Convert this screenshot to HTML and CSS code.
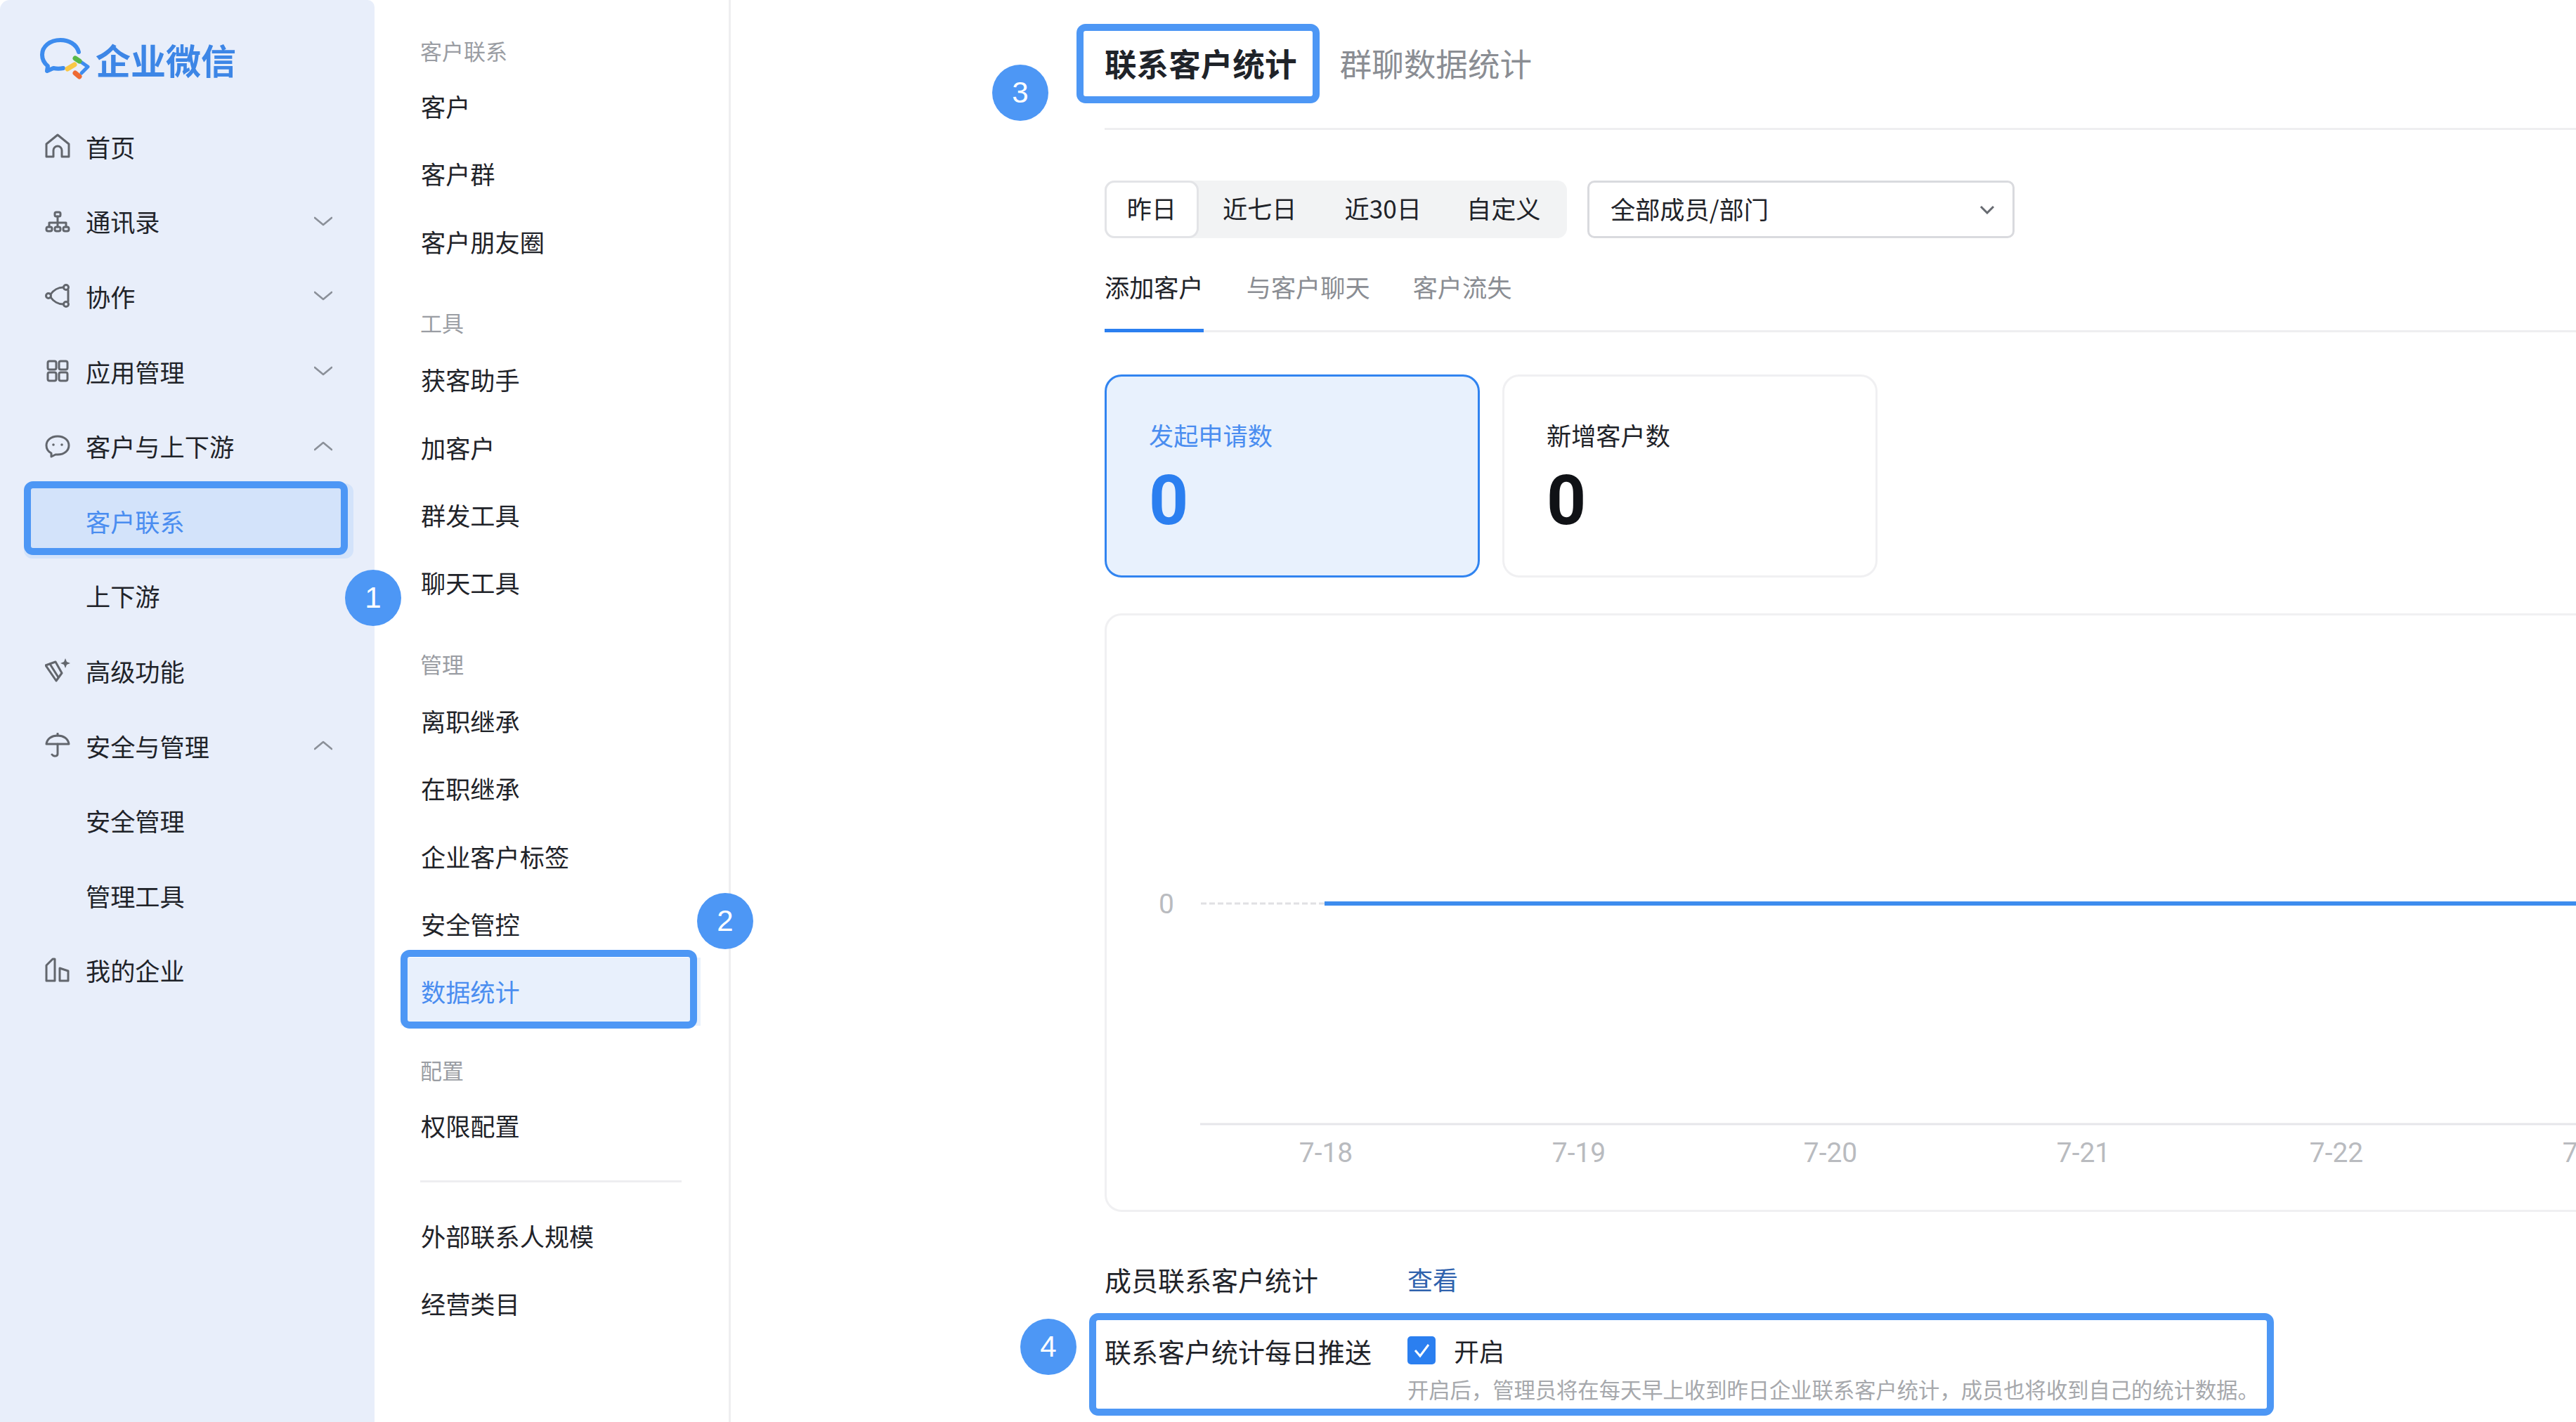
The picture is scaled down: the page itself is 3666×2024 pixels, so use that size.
FILE: index.html
```html
<!DOCTYPE html>
<html lang="zh-CN">
<head>
<meta charset="utf-8">
<title>企业微信</title>
<link rel="stylesheet" href="styles.css">
</head>
<body>
<div class="app">
  <aside class="sidebar">
    <div class="brand">
      <svg class="logo" viewBox="0 0 72 60">
        <path class="logo-bubble" d="M55 20C52 9 41 3 29 3C14 3 3 12 3 24C3 31 6 36 11 40L10 47L19 43C24 44 28 44 33 43"/>
        <path class="logo-blue" d="M58 34L68 41L59 50"/>
        <path class="logo-green" d="M50 29L56 33"/>
        <path class="logo-yellow" d="M39 44L49 38"/>
        <path class="logo-orange" d="M50 50L56 55"/>
      </svg>
      <span class="brand-name">企业微信</span>
    </div>
    <nav class="nav">
      <div class="nav-row">
        <svg class="nav-icon" viewBox="0 0 36 36"><path d="M2 15L18 2L34 15V33H24V24A6 6 0 0 0 12 24V33H2Z"/></svg>
        <span>首页</span>
      </div>
      <div class="nav-row">
        <svg class="nav-icon" viewBox="0 0 36 36"><rect x="14" y="5" width="8" height="6" rx="2"/><path d="M18 11V20M6 26V20H30V26M18 20V26"/><rect x="2" y="26" width="8" height="6" rx="2.5"/><rect x="14" y="26" width="8" height="6" rx="2.5"/><rect x="26" y="26" width="8" height="6" rx="2.5"/></svg>
        <span>通讯录</span>
        <svg class="chev" viewBox="0 0 26 14"><path d="M1 2L13 12L25 2"/></svg>
      </div>
      <div class="nav-row">
        <svg class="nav-icon" viewBox="0 0 36 36"><circle cx="5" cy="18" r="3.5"/><circle cx="30" cy="6" r="3.5"/><circle cx="30" cy="30" r="3.5"/><path d="M8 16C12 10 19 6 26 6M8 20C12 26 19 30 26 30M33 10V26"/></svg>
        <span>协作</span>
        <svg class="chev" viewBox="0 0 26 14"><path d="M1 2L13 12L25 2"/></svg>
      </div>
      <div class="nav-row">
        <svg class="nav-icon" viewBox="0 0 36 36"><rect x="4" y="4" width="12" height="12" rx="2.5"/><rect x="20" y="4" width="12" height="12" rx="2.5"/><rect x="4" y="20" width="12" height="12" rx="2.5"/><rect x="20" y="20" width="12" height="12" rx="2.5"/></svg>
        <span>应用管理</span>
        <svg class="chev" viewBox="0 0 26 14"><path d="M1 2L13 12L25 2"/></svg>
      </div>
      <div class="nav-row">
        <svg class="nav-icon" viewBox="0 0 36 36"><path d="M18 4C8 4 2 10 2 17C2 22 5 26 9 28V33L15 30C16 30 17 30 18 30C28 30 34 24 34 17C34 10 28 4 18 4Z"/><circle class="dot" cx="12" cy="16" r="1.8"/><circle class="dot" cx="24" cy="16" r="1.8"/></svg>
        <span>客户与上下游</span>
        <svg class="chev" viewBox="0 0 26 14"><path d="M1 12L13 2L25 12"/></svg>
      </div>
      <div class="nav-sub is-active">
        <span>客户联系</span>
        <div class="callout callout-nav"></div>
      </div>
      <div class="nav-sub"><span>上下游</span></div>
      <div class="nav-row">
        <svg class="nav-icon" viewBox="0 0 36 36"><path d="M1 11L15 6L24 22L16 33Z"/><path d="M7 9L19 28"/><path class="dot" d="M29 1L31 6L36 8L31 10L29 15L27 10L22 8L27 6Z"/></svg>
        <span>高级功能</span>
      </div>
      <div class="nav-row">
        <svg class="nav-icon" viewBox="0 0 36 36"><path d="M2 16C3 8 10 4 18 4C26 4 33 8 34 16Z"/><path d="M18 1V4M18 16V30C18 34 12 34 10 31"/></svg>
        <span>安全与管理</span>
        <svg class="chev" viewBox="0 0 26 14"><path d="M1 12L13 2L25 12"/></svg>
      </div>
      <div class="nav-sub"><span>安全管理</span></div>
      <div class="nav-sub"><span>管理工具</span></div>
      <div class="nav-row">
        <svg class="nav-icon" viewBox="0 0 36 36"><path d="M2 33V11L11 2H14V33Z"/><path d="M21 33V15L33 19V33Z"/></svg>
        <span>我的企业</span>
      </div>
    </nav>
  </aside>

  <aside class="subnav">
    <div class="group-label">客户联系</div>
    <div class="sub-item">客户</div>
    <div class="sub-item">客户群</div>
    <div class="sub-item">客户朋友圈</div>
    <div class="group-label group-next">工具</div>
    <div class="sub-item">获客助手</div>
    <div class="sub-item">加客户</div>
    <div class="sub-item">群发工具</div>
    <div class="sub-item">聊天工具</div>
    <div class="group-label group-next">管理</div>
    <div class="sub-item">离职继承</div>
    <div class="sub-item">在职继承</div>
    <div class="sub-item">企业客户标签</div>
    <div class="sub-item">安全管控</div>
    <div class="sub-item is-active">
      数据统计
      <div class="callout callout-sub"></div>
    </div>
    <div class="group-label group-tight">配置</div>
    <div class="sub-item">权限配置</div>
    <div class="divider"></div>
    <div class="sub-item">外部联系人规模</div>
    <div class="sub-item">经营类目</div>
  </aside>

  <main class="main">
    <header class="title-tabs">
      <div class="title-tab is-active">联系客户统计<div class="callout callout-title"></div></div>
      <div class="title-tab">群聊数据统计</div>
    </header>

    <div class="filters">
      <div class="segments">
        <div class="segment is-active">昨日</div>
        <div class="segment seg-b">近七日</div>
        <div class="segment seg-c">近30日</div>
        <div class="segment seg-d">自定义</div>
      </div>
      <div class="select">
        <span>全部成员/部门</span>
        <svg class="select-chev" viewBox="0 0 22 13"><path d="M2 2L11 11L20 2"/></svg>
      </div>
    </div>

    <div class="metric-tabs">
      <div class="metric-tab is-active">添加客户</div>
      <div class="metric-tab">与客户聊天</div>
      <div class="metric-tab">客户流失</div>
    </div>

    <div class="cards">
      <div class="card is-active">
        <div class="card-label">发起申请数</div>
        <div class="card-num">0</div>
      </div>
      <div class="card">
        <div class="card-label">新增客户数</div>
        <div class="card-num">0</div>
      </div>
    </div>

    <div class="chart">
      <svg class="chart-svg" viewBox="0 0 2200 846">
        <line class="grid-dash" x1="134" y1="410" x2="310" y2="410"/>
        <line class="series" x1="310" y1="410" x2="2200" y2="410"/>
        <line class="axis" x1="133" y1="724" x2="2200" y2="724"/>
        <text class="tick" x="85" y="424">0</text>
        <text class="tick" x="312" y="778">7-18</text>
        <text class="tick" x="672" y="778">7-19</text>
        <text class="tick" x="1030" y="778">7-20</text>
        <text class="tick" x="1390" y="778">7-21</text>
        <text class="tick" x="1750" y="778">7-22</text>
        <text class="tick" x="2110" y="778">7-23</text>
      </svg>
    </div>

    <div class="form-row form-view">
      <div class="form-label">成员联系客户统计</div>
      <a class="form-link">查看</a>
    </div>
    <div class="form-push">
      <div class="form-row">
        <div class="form-label">联系客户统计每日推送</div>
        <div class="check">
          <svg class="check-box" viewBox="0 0 40 40"><rect width="40" height="40" rx="5"/><path d="M11 20L18 28L30 12"/></svg>
          <span>开启</span>
        </div>
      </div>
      <div class="form-help">开启后，管理员将在每天早上收到昨日企业联系客户统计，成员也将收到自己的统计数据。</div>
      <div class="callout callout-push"></div>
    </div>
  </main>

  <div class="badge badge-1">1</div>
  <div class="badge badge-2">2</div>
  <div class="badge badge-3">3</div>
  <div class="badge badge-4">4</div>
</div>
</body>
</html>
```
FILE: styles.css
```css
* { box-sizing: border-box; }
html, body { margin: 0; padding: 0; background: #fff; }
body {
  font-family: "Noto Sans CJK SC", "Noto Sans", sans-serif;
  font-size: 35.2px;
  color: #1f2329;
}
.app {
  position: relative;
  display: flex;
  width: 3666px;
  height: 2024px;
  overflow: hidden;
}

/* Sidebar */
.sidebar {
  flex: 0 0 533px;
  background: #e8eefa;
  border-radius: 14px 10px 0 0;
}
.brand {
  display: flex;
  align-items: center;
  height: 155px;
  padding: 13px 0 0 57px;
}
.logo { width: 72px; height: 60px; flex: none; margin-right: 7px; fill: none; stroke-linecap: round; stroke-linejoin: round; }
.logo-bubble { stroke: #3d8cee; stroke-width: 6; }
.logo-blue { stroke: #3d8cee; stroke-width: 5; }
.logo-green { stroke: #58b947; stroke-width: 7; }
.logo-yellow { stroke: #f9c846; stroke-width: 7; }
.logo-orange { stroke: #ee6a33; stroke-width: 7; }
.brand-name { font-size: 50px; font-weight: 700; color: #3d86e6; line-height: 1; }
.nav-row, .nav-sub {
  display: flex;
  align-items: center;
  height: 106.6px;
  color: #1f2329;
}
.nav-row { padding-left: 64px; }
.nav-sub { padding-left: 122px; }
.nav-icon {
  width: 36px;
  height: 36px;
  flex: none;
  margin-right: 22px;
  fill: none;
  stroke: #62666d;
  stroke-width: 3;
  stroke-linejoin: round;
  stroke-linecap: round;
}
.nav-icon .dot { fill: #62666d; stroke: none; }
.chev {
  width: 26px;
  height: 14px;
  margin-left: auto;
  margin-right: 60px;
  fill: none;
  stroke: #8b9099;
  stroke-width: 2.6;
  stroke-linecap: round;
  stroke-linejoin: round;
}
.nav-sub.is-active {
  position: relative;
  margin: 0 30px 0 34px;
  padding-left: 88px;
  background: #d3e3fa;
  border-radius: 12px;
  color: #4a8df0;
}

/* Callouts and badges */
.callout {
  position: absolute;
  border: 10px solid #4d97f5;
  border-radius: 13px;
  pointer-events: none;
}
.callout-nav { top: -3px; left: 0; right: 8px; bottom: 5px; }
.callout-sub { top: -11px; left: 0; right: 5px; bottom: -4px; }
.callout-title { top: -25px; left: -40px; right: -32px; bottom: -28px; }
.callout-push { top: -27px; left: -22px; width: 1686px; height: 146px; }
.badge {
  position: absolute;
  width: 80px;
  height: 80px;
  border-radius: 50%;
  background: #4d97f5;
  color: #fff;
  font-family: "Liberation Sans", sans-serif;
  font-size: 42px;
  line-height: 80px;
  text-align: center;
}
.badge-1 { left: 491px; top: 811px; }
.badge-2 { left: 992px; top: 1271px; }
.badge-3 { left: 1412px; top: 92px; }
.badge-4 { left: 1452px; top: 1877px; }

/* Second column */
.subnav {
  flex: 0 0 507px;
  padding-top: 41px;
  border-right: 3px solid #eeeef0;
}
.group-label {
  height: 62px;
  padding-left: 65px;
  font-size: 31px;
  line-height: 62px;
  color: #9a9da3;
}
.group-next { margin: 36px 0 2px; }
.group-tight { margin-top: 32px; }
.sub-item {
  height: 96.4px;
  padding-left: 66px;
  line-height: 96.4px;
  color: #1f2329;
}
.sub-item.is-active {
  position: relative;
  margin: 0 40px 0 37px;
  padding-left: 29px;
  background: #e8f0fc;
  color: #4a8df0;
}
.divider {
  height: 3px;
  margin: 30px 67px 28px 65px;
  background: #eeeef0;
}

/* Main */
.main {
  flex: 1;
  min-width: 0;
  padding-left: 532px;
  overflow: hidden;
}
.title-tabs {
  display: flex;
  gap: 61px;
  height: 185px;
  padding-top: 59px;
  border-bottom: 3px solid #eeeef0;
}
.title-tab {
  position: relative;
  height: 60px;
  font-size: 45.6px;
  line-height: 60px;
  color: #8a8d93;
}
.title-tab.is-active { font-weight: 700; color: #1f2329; }
.filters {
  display: flex;
  gap: 29px;
  margin-top: 72px;
}
.segments {
  display: flex;
  width: 658px;
  height: 82px;
  background: #f2f3f4;
  border-radius: 14px;
}
.segment { line-height: 78px; }
.segment.is-active {
  width: 134px;
  text-align: center;
  background: #fff;
  border: 3px solid #e3e4e7;
  border-radius: 14px;
  line-height: 72px;
}
.seg-b { margin-left: 34px; }
.seg-c { margin-left: 68px; }
.seg-d { margin-left: 64px; }
.select {
  display: flex;
  align-items: center;
  justify-content: space-between;
  width: 608px;
  height: 82px;
  padding: 0 25px 4px 30px;
  border: 3px solid #d9dade;
  border-radius: 10px;
}
.select-chev { width: 22px; height: 13px; margin-top: 4px; fill: none; stroke: #666a70; stroke-width: 3; }
.metric-tabs {
  display: flex;
  gap: 61px;
  height: 96px;
  margin-top: 38px;
  border-bottom: 3px solid #eeeef0;
}
.metric-tab {
  height: 96px;
  line-height: 62px;
  color: #8a8d93;
}
.metric-tab.is-active {
  color: #1f2329;
  border-bottom: 5px solid #2b7ff0;
}
.cards {
  display: flex;
  gap: 32px;
  margin-top: 60px;
}
.card {
  width: 534px;
  height: 289px;
  padding: 58px 0 0 60px;
  background: #fff;
  border: 3px solid #f0f0f2;
  border-radius: 24px;
}
.card.is-active {
  background: #e8f1fd;
  border-color: #3184f0;
}
.card-label { line-height: 50px; }
.card-num {
  margin-top: 14px;
  font-family: Roboto, sans-serif;
  font-size: 98px;
  font-weight: 700;
  line-height: 110px;
  color: #101216;
}
.card.is-active .card-label { color: #4a8df0; }
.card.is-active .card-num { color: #2b7ff0; }
.chart {
  width: 2206px;
  height: 852px;
  margin-top: 51px;
  border: 3px solid #f0f0f2;
  border-radius: 24px;
}
.chart-svg { display: block; width: 2200px; height: 846px; }
.grid-dash { stroke: #e0e0e3; stroke-width: 3; stroke-dasharray: 8 4; }
.series { stroke: #3d8cee; stroke-width: 6; }
.axis { stroke: #e6e6ea; stroke-width: 3; }
.tick {
  font-family: Roboto, sans-serif;
  font-size: 39px;
  fill: #b9bbbf;
  text-anchor: middle;
}
.form-row {
  display: flex;
  align-items: center;
  height: 52px;
  font-size: 38px;
}
.form-view { margin-top: 69px; }
.form-label { flex: 0 0 431px; }
.form-link { font-size: 36px; color: #2f62ad; }
.form-push { position: relative; margin-top: 50px; }
.check { display: flex; align-items: center; gap: 26px; font-size: 36px; }
.check-box { width: 40px; height: 40px; }
.check-box rect { fill: #2b7ff0; }
.check-box path { fill: none; stroke: #fff; stroke-width: 3; }
.form-help {
  margin: 9px 0 0 431px;
  font-size: 30.3px;
  line-height: 40px;
  color: #a6a8ac;
  white-space: nowrap;
}
```
